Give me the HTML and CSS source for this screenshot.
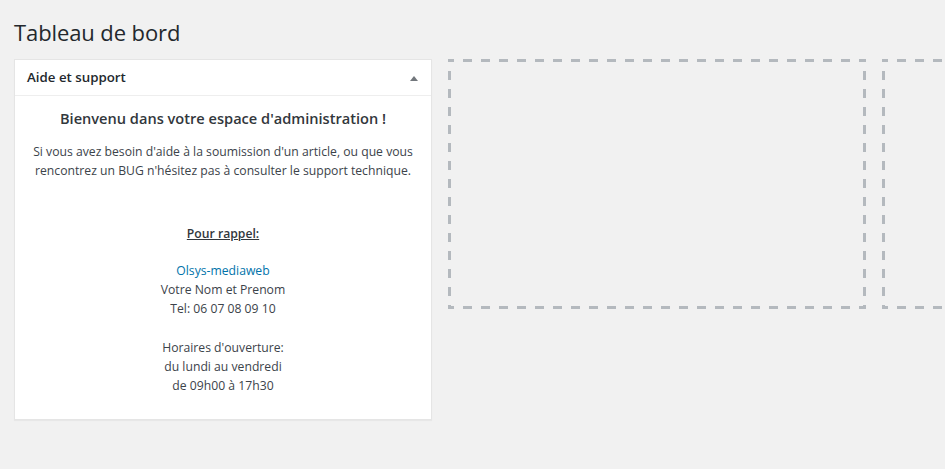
FILE: index.html
```html
<!DOCTYPE html>
<html lang="fr">
<head>
<meta charset="utf-8">
<title>Tableau de bord</title>
<link rel="stylesheet" href="styles.css">
</head>
<body>
<div class="wrap">
  <h1 class="page-title">Tableau de bord</h1>
  <div class="widgets">
    <div class="col">
      <div class="postbox">
        <div class="postbox-header">
          <h2 class="postbox-title">Aide et support</h2>
          <span class="toggle" aria-hidden="true"></span>
        </div>
        <div class="inside">
          <h3 class="welcome">Bienvenu dans votre espace d'administration !</h3>
          <p class="intro">Si vous avez besoin d'aide à la soumission d'un article, ou que vous rencontrez un BUG n'hésitez pas à consulter le support technique.</p>
          <p class="reminder"><strong class="reminder-title">Pour rappel:</strong></p>
          <p class="contact"><a href="#" class="link">Olsys-mediaweb</a><br>Votre Nom et Prenom<br>Tel: 06 07 08 09 10</p>
          <p class="contact">Horaires d'ouverture:<br>du lundi au vendredi<br>de 09h00 à 17h30</p>
        </div>
      </div>
    </div>
    <div class="col"><div class="empty"></div></div>
    <div class="col col-last"><div class="empty"></div></div>
  </div>
</div>
</body>
</html>
```
FILE: styles.css
```css
html, body {
  margin: 0;
  padding: 0;
  overflow: hidden;
}
body {
  background: #f1f1f1;
  color: #3c434a;
  font-family: "Open Sans", "Noto Sans", sans-serif;
  font-size: 12.2px;
  line-height: 1.4;
  width: 945px;
  height: 469px;
}
.wrap {
  padding: 0 0 0 14px;
}
.page-title {
  margin: 0;
  padding: 18px 0 0;
  height: 59px;
  box-sizing: border-box;
  font-size: 22px;
  font-weight: 400;
  line-height: 28px;
  letter-spacing: -0.1px;
  color: #23282d;
}
.widgets {
  display: flex;
  gap: 16px;
  align-items: flex-start;
}
.col {
  flex: 0 0 418px;
  width: 418px;
}
.col-last {
  flex: 1 1 auto;
  width: auto;
  min-width: 0;
  overflow: hidden;
}
.col-last .empty {
  width: 418px;
}
.postbox {
  background: #fff;
  border: 1px solid #e5e5e5;
  box-shadow: 0 1px 1px rgba(0,0,0,.04);
  box-sizing: border-box;
  height: 361px;
}
.postbox-header {
  display: flex;
  align-items: center;
  justify-content: space-between;
  height: 36px;
  box-sizing: border-box;
  padding: 0 13px 0 12px;
  border-bottom: 1px solid #eee;
}
.postbox-title {
  margin: 0;
  font-size: 13.3px;
  font-weight: 600;
  color: #23282d;
  line-height: 1.4;
}
.toggle {
  width: 0;
  height: 0;
  border-left: 4px solid transparent;
  border-right: 4px solid transparent;
  border-bottom: 5px solid #72777c;
  margin-right: 0;
  margin-top: 2px;
}
.inside {
  padding: 0 12px 12px;
  text-align: center;
}
.welcome {
  margin: 11px 0 0;
  font-size: 14.6px;
  font-weight: 600;
  line-height: 22px;
  color: #32373c;
}
.intro {
  margin: 13px 0 0;
  line-height: 19px;
}
.reminder {
  margin: 44px 0 0;
  line-height: 19px;
}
.reminder-title {
  text-decoration: underline;
  font-weight: 600;
  color: #32373c;
}
.contact {
  margin: 18px 0 0;
  line-height: 19px;
}
.contact + .contact {
  margin-top: 20px;
}
.link {
  color: #0073aa;
  text-decoration: none;
}
.empty {
  height: 250px;
  box-sizing: border-box;
  background:
    repeating-linear-gradient(90deg, #b4b9be 0 6px, transparent 6px 15px, #b4b9be 15px 18px) left top / 100% 3px no-repeat,
    repeating-linear-gradient(90deg, #b4b9be 0 6px, transparent 6px 15px, #b4b9be 15px 18px) left bottom / 100% 3px no-repeat,
    repeating-linear-gradient(180deg, #b4b9be 0 3px, transparent 3px 12px, #b4b9be 12px 18px) left top / 3px 100% no-repeat,
    repeating-linear-gradient(180deg, #b4b9be 0 3px, transparent 3px 12px, #b4b9be 12px 18px) right top / 3px 100% no-repeat;
}
```
